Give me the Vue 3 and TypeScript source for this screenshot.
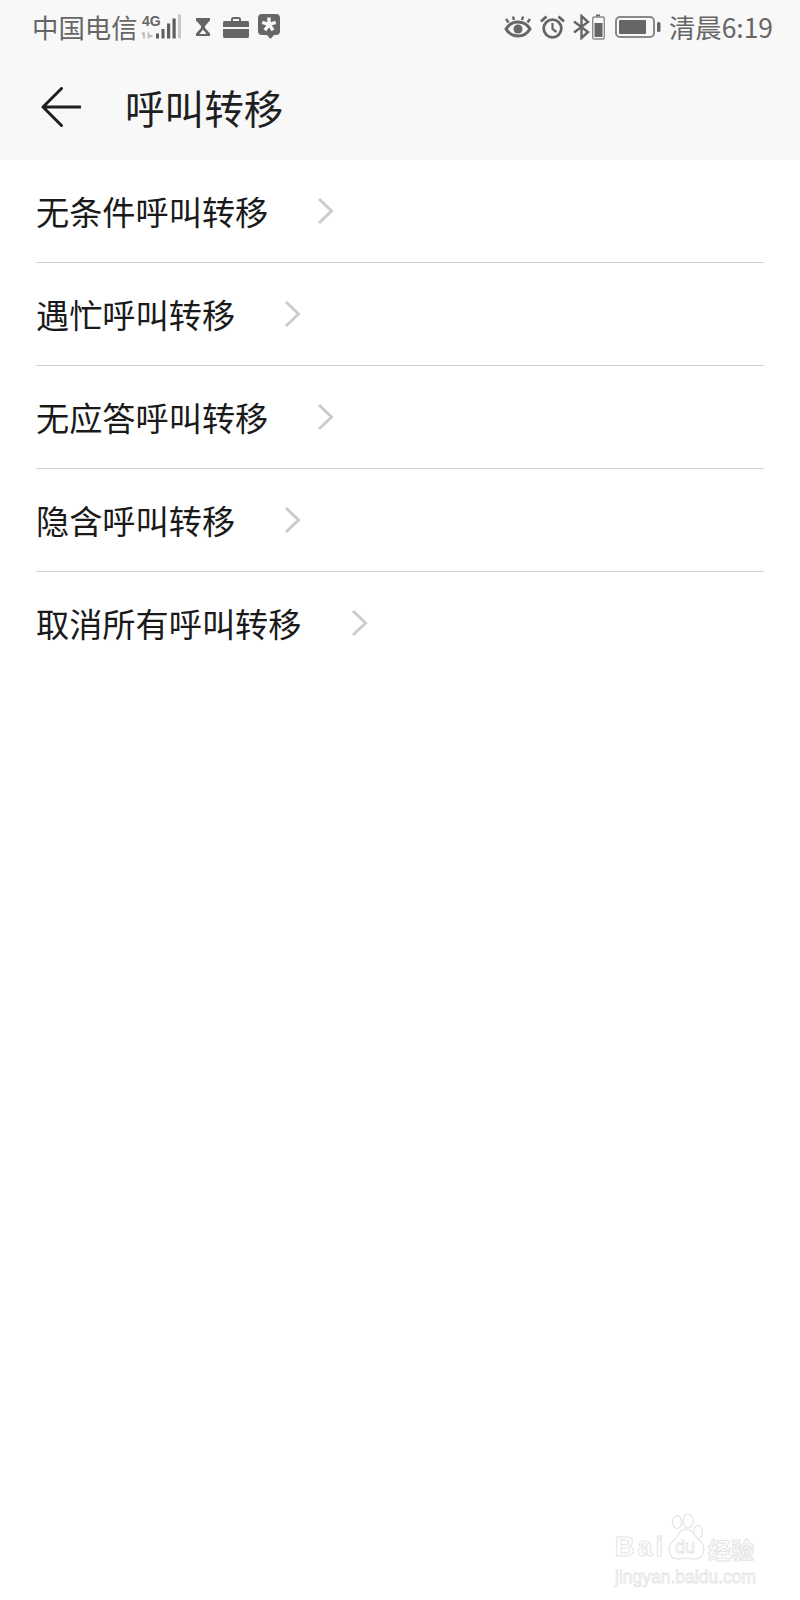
<script setup lang="ts">
const rows: string[] = [
  '无条件呼叫转移',
  '遇忙呼叫转移',
  '无应答呼叫转移',
  '隐含呼叫转移',
  '取消所有呼叫转移'
]
</script>

<template>
  <div class="page">
    <header class="top">
      <div class="status">
        <div class="status__side">
          <span class="status__text">中国电信</span>
          <svg class="ic-signal" width="42" height="26" viewBox="0 0 42 26">
            <text x="1" y="12" class="net">4G</text>
            <path d="M3 18.500v6M1 20.500L3 18.500M7.500 18.500v6M7.500 22h4" stroke="#bdbdbd" stroke-width="1.800" fill="none" />
            <rect x="15" y="19.500" width="3" height="5" fill="#5e5e5e" />
            <rect x="20.500" y="15" width="3" height="9.500" fill="#5e5e5e" />
            <rect x="26" y="9.500" width="3.200" height="15" fill="#5e5e5e" />
            <rect x="31.500" y="4.500" width="3.200" height="20" fill="#5e5e5e" />
            <rect x="37" y="0.500" width="3" height="24" fill="#c9c9c9" />
          </svg>
          <svg class="ic-glass" width="16" height="20" viewBox="0 0 16 20">
            <path d="M1 1h14v2.500l-5 5.500v2l5 5.500V19H1v-2.500L6 11V9L1 3.500z" fill="#666" />
            <path d="M8 12.500l3.600 4.500H4.400z" fill="#f8f8f8" />
          </svg>
          <svg class="ic-case" width="26" height="21" viewBox="0 0 26 21">
            <path d="M9 5V2.500A1.500 1.500 0 0 1 10.500 1h5A1.500 1.500 0 0 1 17 2.500V5" fill="none" stroke="#666" stroke-width="2" />
            <path d="M1.500 4h23A1.500 1.500 0 0 1 26 5.500V10H0V5.500A1.500 1.500 0 0 1 1.500 4zM0 12h26v7.500a1.500 1.500 0 0 1-1.500 1.500h-23A1.500 1.500 0 0 1 0 19.500z" fill="#666" />
          </svg>
          <svg class="ic-chat" width="22" height="25" viewBox="0 0 22 25">
            <path d="M4 0h14a4 4 0 0 1 4 4v13a4 4 0 0 1-4 4h-2l-3.500 4-3.500-4H4a4 4 0 0 1-4-4V4a4 4 0 0 1 4-4z" fill="#666" />
            <path d="M11 10.500V3.500M11 10.500l6.700-2.200M11 10.500l4.100 5.700M11 10.500l-4.100 5.700M11 10.500L4.300 8.300" stroke="#f8f8f8" stroke-width="3.400" fill="none" />
          </svg>
        </div>
        <div class="status__side">
          <svg class="ic-eye" width="28" height="22" viewBox="0 0 28 22">
            <path d="M2 13c3-5 7-7 12-7s9 2 12 7c-3 5-7 7-12 7s-9-2-12-7z" fill="none" stroke="#666" stroke-width="3" />
            <circle cx="14" cy="13" r="4.500" fill="#666" />
            <path d="M4.500 6.500L2 3M10 4L9 0.500M18 4l1-3.500M23.500 6.500L26 3" stroke="#666" stroke-width="2.400" />
          </svg>
          <svg class="ic-alarm" width="25" height="24" viewBox="0 0 25 24">
            <circle cx="12.500" cy="13.500" r="8.800" fill="none" stroke="#666" stroke-width="2.800" />
            <path d="M12.500 8v6l4 3" fill="none" stroke="#666" stroke-width="2.200" />
            <path d="M1 6.500l5.500-5M24 6.500l-5.500-5" stroke="#666" stroke-width="2.800" />
          </svg>
          <svg class="ic-bt" width="34" height="26" viewBox="0 0 34 26">
            <path d="M2 7.500l14 10.500-6.500 6V2L16 8 2 18.500" fill="none" stroke="#666" stroke-width="2.400" />
            <path d="M24 0.500h4v2h-4z" fill="#666" />
            <rect x="20.700" y="3" width="11.600" height="22" rx="1.500" fill="none" stroke="#8a8a8a" stroke-width="1.400" />
            <rect x="22.500" y="9" width="8" height="14" fill="#666" />
          </svg>
          <svg class="ic-batt" width="46" height="22" viewBox="0 0 46 22">
            <rect x="1" y="1" width="38" height="20" rx="4" fill="none" stroke="#8a8a8a" stroke-width="2" />
            <rect x="4" y="4" width="27" height="14" rx="1" fill="#666" />
            <rect x="42" y="6" width="3.500" height="10" rx="1.500" fill="#666" />
          </svg>
          <span class="status__text status__text--time">清晨6:19</span>
        </div>
      </div>
      <div class="bar">
        <svg class="back" width="40" height="40" viewBox="0 0 40 40">
          <path d="M20.500 1.500L2 20l18.500 18.500M2 20h37" fill="none" stroke="#1f1f1f" stroke-width="3" stroke-linecap="round" stroke-linejoin="round" />
        </svg>
        <h1 class="title">呼叫转移</h1>
      </div>
    </header>

    <ul class="list">
      <li v-for="row in rows" :key="row" class="row">
        <span class="row__label">{{ row }}</span>
        <svg class="row__chev" width="17" height="28" viewBox="0 0 17 28">
          <path d="M2 2l12.500 12L2 26" fill="none" stroke="#cccccc" stroke-width="3" />
        </svg>
      </li>
    </ul>

    <div class="mark">
      <div class="mark__top">
        <span class="mark__bai">Bai</span>
        <svg class="mark__paw" width="40" height="52" viewBox="0 0 40 52">
          <g fill="#fff" stroke="#e4e4e4" stroke-width="1.200">
            <ellipse cx="10" cy="10" rx="4.500" ry="6.500" />
            <ellipse cx="21" cy="9" rx="5" ry="7" />
            <ellipse cx="31" cy="20" rx="4.500" ry="6.500" />
            <path d="M19 17c7 0 9 8 14 12 7 6 4 18-6 18-3 0-5-1-8-1s-5 1-8 1C2 47-1 35 6 29c5-4 6-12 13-12z" />
          </g>
          <text x="8" y="41" class="mark__du">du</text>
        </svg>
        <span class="mark__cn">经验</span>
      </div>
      <div class="mark__url">jingyan.baidu.com</div>
    </div>
  </div>
</template>

<style scoped>
.page {
  position: relative;
  width: 800px;
  height: 1600px;
  overflow: hidden;
  background: #fff;
  font-family: "Noto Sans CJK SC", "Noto Sans", sans-serif;
}

.top {
  height: 160px;
  background: #f8f8f8;
}

.status {
  height: 54px;
  box-sizing: border-box;
  padding: 0 27px 0 32px;
  display: flex;
  justify-content: space-between;
  align-items: center;
}

.status__side {
  display: flex;
  align-items: center;
}

.status__text {
  font-size: 26.4px;
  line-height: 1;
  color: #666;
}

.status__text--time {
  margin-left: 8px;
}

.ic-signal {
  margin-left: 3px;
}

.ic-glass {
  margin-left: 12px;
}

.ic-case {
  margin-left: 12px;
}

.ic-chat {
  margin-left: 9px;
  margin-top: -2px;
}

.ic-alarm {
  margin-left: 8px;
}

.ic-bt {
  margin-left: 7px;
}

.ic-batt {
  margin-left: 9px;
}

.net {
  font-family: "Liberation Sans", sans-serif;
  font-size: 14px;
  font-weight: 700;
  fill: #666;
}

.bar {
  height: 106px;
  display: flex;
  align-items: center;
  padding-left: 41px;
  box-sizing: border-box;
}

.title {
  margin: 0 0 0 44px;
  font-size: 39.6px;
  font-weight: 400;
  line-height: 1;
  color: #1f1f1f;
}

.list {
  list-style: none;
  margin: 0;
  padding: 0 36px;
}

.row {
  height: 103px;
  box-sizing: border-box;
  border-bottom: 1px solid #cfcfcf;
  display: flex;
  align-items: center;
  gap: 49px;
}

.row:last-child {
  border-bottom-color: transparent;
}

.row__label {
  font-size: 33.2px;
  line-height: 1;
  color: #1a1a1a;
}

.mark {
  position: absolute;
  left: 615px;
  top: 1512px;
  width: 150px;
  color: #fff;
}

.mark__top {
  display: flex;
  align-items: flex-end;
  height: 52px;
}

.mark__bai,
.mark__cn,
.mark__url {
  -webkit-text-stroke: 1px #e4e4e4;
}

.mark__bai {
  flex: none;
  width: 52px;
  font-family: "Liberation Sans", sans-serif;
  font-size: 27px;
  line-height: 1;
  font-weight: 700;
  letter-spacing: 3px;
  margin-bottom: 3px;
}

.mark__paw {
  flex: none;
}

.mark__du {
  font-family: "Liberation Sans", sans-serif;
  font-size: 18px;
  fill: #fff;
  stroke: #e4e4e4;
  stroke-width: 0.8;
}

.mark__cn {
  font-size: 23px;
  line-height: 1.2;
  font-weight: 700;
  white-space: nowrap;
  margin-left: 1px;
}

.mark__url {
  font-family: "Liberation Sans", sans-serif;
  font-size: 17.5px;
  line-height: 22px;
  margin-top: 2px;
  -webkit-text-stroke: 0.8px #e4e4e4;
}
</style>
